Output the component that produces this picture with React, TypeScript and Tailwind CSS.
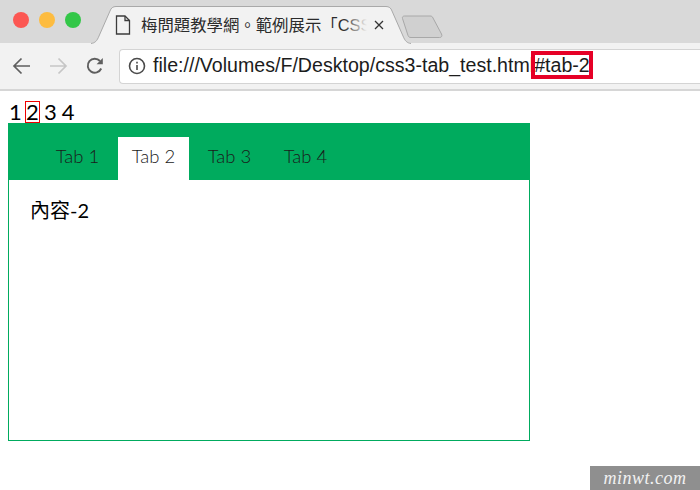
import React from 'react';

const tabs = ['Tab 1', 'Tab 2', 'Tab 3', 'Tab 4'];

const App: React.FC = () => {
  return (
    <div className="relative flex h-[490px] w-[700px] flex-col overflow-hidden bg-white font-['Liberation_Sans',sans-serif]">
      {/* Tab strip */}
      <div className="relative flex h-[43px] items-center bg-[#d9d9d9] pl-[13px]">
        <div className="flex gap-[10px] pb-[4px]">
          <span className="h-4 w-4 rounded-full bg-[#fc5753]" />
          <span className="h-4 w-4 rounded-full bg-[#fdbc40]" />
          <span className="h-4 w-4 rounded-full bg-[#33c748]" />
        </div>
        <svg className="absolute left-[88px] top-[5px]" width="326" height="39" viewBox="0 0 326 39">
          <path d="M3 38.5C7 38 9 36 11 31L22 6C23 3 25 1.500 28 1.500H298C301 1.500 303 3 304 6L315 31C317 36 319 38 323 38.500" fill="#f2f2f2" stroke="#a9a9a9" />
        </svg>
        <svg className="absolute left-[400px] top-[15px]" width="44" height="24" viewBox="0 0 44 24">
          <path d="M2.500 3.500C2 2 3 1 4.500 1H30C31.500 1 32.500 1.500 33 3L41.500 19C42.500 21 41.500 22.500 39.500 22.500H11C9.500 22.500 8.500 22 8 20.500Z" fill="#d0d0d0" stroke="#a8a8a8" />
        </svg>
        <svg className="absolute left-[115px] top-[15px]" width="16" height="20" viewBox="0 0 16 20" fill="none" stroke="#3c3c3c" strokeWidth="1.300">
          <path d="M1.500 1H10L14.500 5.500V19H1.500Z" />
          <path d="M10 1V5.500H14.500" />
        </svg>
        <div className="absolute left-[141px] top-[13px] flex w-[226px] items-center overflow-hidden whitespace-nowrap text-[16.400px] leading-[24px] text-[#2b2b2b] font-['Liberation_Sans','Noto_Sans_CJK_TC',sans-serif]">
          梅問題教學網。範例展示「CSS3
        </div>
        <div className="absolute left-[343px] top-[13px] h-6 w-[24px] bg-gradient-to-r from-transparent to-[#f2f2f2]" />
        <svg className="absolute left-[374px] top-[20px]" width="10" height="10" viewBox="0 0 10 10" stroke="#333" strokeWidth="1.300">
          <path d="M1 1L9 9M9 1L1 9" />
        </svg>
      </div>

      {/* Toolbar */}
      <div className="flex h-[48px] items-center gap-[9px] border-b-2 border-[#d6d6d6] bg-[#f2f2f2] pl-[12px]">
        <svg width="19" height="18" viewBox="0 0 19 18" fill="none" stroke="#5f5f5f" strokeWidth="1.700">
          <path d="M18 9H2M9.500 1.500L2 9L9.500 16.500" />
        </svg>
        <svg width="19" height="18" viewBox="0 0 19 18" fill="none" stroke="#c6c6c6" strokeWidth="1.700" className="ml-[9px]">
          <path d="M1 9H17M9.500 1.500L17 9L9.500 16.500" />
        </svg>
        <svg width="18" height="18" viewBox="0 0 18 18" fill="none" stroke="#5f5f5f" strokeWidth="1.900" className="ml-[9px]">
          <path d="M15.200 11.500A7 7 0 1 1 14 4" />
          <path d="M16.800 1V7.200H10.600Z" fill="#5f5f5f" stroke="none" />
        </svg>
        <div className="ml-[6px] flex h-[35px] flex-1 items-center rounded-l-[4px] border border-r-0 border-[#d4d4d4] bg-white pl-[8px]">
          <svg width="18" height="18" viewBox="0 0 18 18" fill="none" stroke="#4a4a4a" strokeWidth="1.600">
            <circle cx="9" cy="9" r="7.500" />
            <path d="M9 8V13M9 4.800V6.400" />
          </svg>
          <div className="ml-[7px] whitespace-nowrap text-[19.600px] text-[#1c1c1c]">
            file:///Volumes/F/Desktop/css3-tab_test.html
            <span className="outline-[4px] outline-solid -outline-offset-1 outline-[#e60026]">#tab-2</span>
          </div>
        </div>
      </div>

      {/* Page */}
      <div className="flex flex-col px-2 font-['Lato','Noto_Sans_CJK_TC',sans-serif] text-black">
        <div className="flex h-[32px] items-end pl-[1px] text-[22px] leading-[20px]">
          <span className="w-[16px] pb-[1px]">1</span>
          <span className="flex h-[22px] w-[15px] items-center justify-center border border-[#f00000]">2</span>
          <span className="ml-[4px] pb-[1px]">3</span>
          <span className="ml-[5px] pb-[1px]">4</span>
        </div>
        <div className="flex h-[318px] w-[522px] flex-col border border-[#00ab5e]">
          <div className="flex h-[56px] shrink-0 items-end gap-[5px] bg-[#00ab5e] pl-[33px]">
            {tabs.map((tab, i) => (
              <div
                key={tab}
                className={`flex h-[43px] w-[71px] items-center justify-center pb-[3px] text-[18.500px] font-light text-[#1a1a1a] ${i === 1 ? 'bg-white' : ''}`}
              >
                {tab}
              </div>
            ))}
          </div>
          <div className="px-[21px] pt-[18px] text-[20px] leading-[24px]">內容-2</div>
        </div>
      </div>

      {/* Watermark */}
      <div className="absolute bottom-0 right-0 flex h-6 w-[110px] items-center justify-center bg-[#8f8f8f] font-['Liberation_Serif',serif] text-[18px] italic tracking-[0.5px] text-[#f2f2f2]">
        minwt.com
      </div>
    </div>
  );
};

export default App;
